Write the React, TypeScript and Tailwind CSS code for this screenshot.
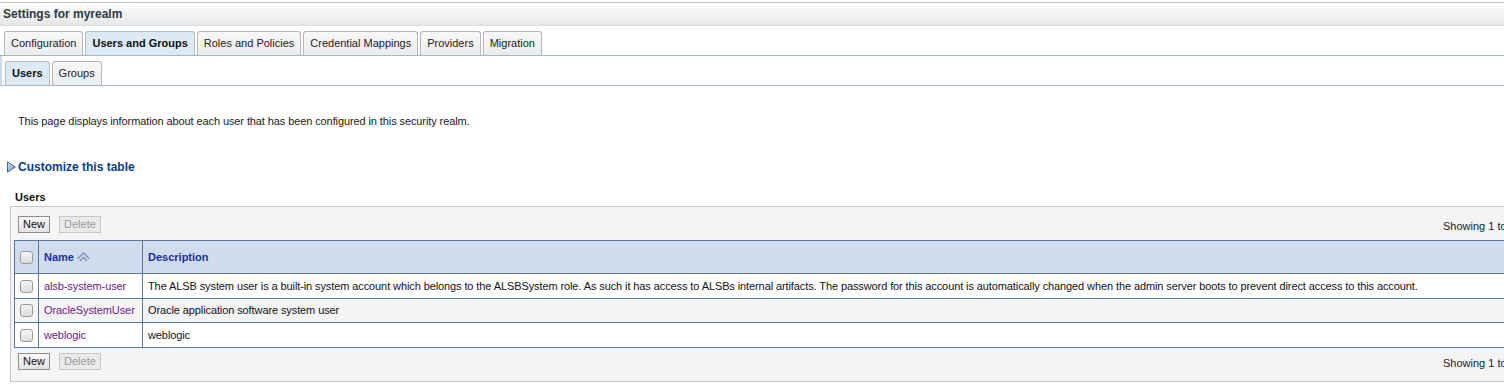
import React from "react";

const font = { fontFamily: '"Liberation Sans", Arial, sans-serif' };

function Tab({ label, active }: { label: string; active?: boolean }) {
  return (
    <div
      className={
        "h-[24px] flex items-center px-[6px] rounded-t-[3px] border border-b-0 text-[11px] " +
        (active
          ? "bg-[#dde9f3] border-[#a9bfd3] font-bold text-[#111]"
          : "bg-gradient-to-b from-[#f8f8f8] to-[#ececec] border-[#b5b5b5] text-[#222]")
      }
    >
      {label}
    </div>
  );
}

function Checkbox() {
  return (
    <div className="w-[13px] h-[13px] rounded-[3px] border border-[#9a9a9a] bg-gradient-to-b from-[#f4f4f4] to-[#dedede]" />
  );
}

function Btn({ label, disabled }: { label: string; disabled?: boolean }) {
  return (
    <div
      className={
        "h-[17px] flex items-center px-[4px] border text-[11px] " +
        (disabled
          ? "border-[#c8c8c8] bg-[#eaeaea] text-[#9a9a9a]"
          : "border-[#8e8e8e] bg-gradient-to-b from-[#fafafa] to-[#e2e2e2] text-[#111]")
      }
    >
      {label}
    </div>
  );
}

function Toolbar() {
  return (
    <div className="flex items-center pl-[7px] pr-[16px] h-[17px]">
      <div className="flex gap-[9px]">
        <Btn label="New" />
        <Btn label="Delete" disabled />
      </div>
      <div className="ml-auto w-[250px] text-[11px] leading-[14px] text-[#222] translate-y-[1px]">
        Showing 1 to 3 of 3 &nbsp;Previous | Next
      </div>
    </div>
  );
}

const rows = [
  {
    name: "alsb-system-user",
    desc: "The ALSB system user is a built-in system account which belongs to the ALSBSystem role. As such it has access to ALSBs internal artifacts. The password for this account is automatically changed when the admin server boots to prevent direct access to this account.",
  },
  { name: "OracleSystemUser", desc: "Oracle application software system user" },
  { name: "weblogic", desc: "weblogic" },
];

export default function App() {
  return (
    <div className="w-[1504px] h-[384px] overflow-hidden bg-white pt-[2px]" style={font}>
      <div className="h-[24px] border-t border-[#c3c7cb] border-b border-b-[#dcdedc] bg-gradient-to-b from-white to-[#e5e7e5] flex items-center pl-[3px] text-[12px] font-bold text-[#2f3a40]">
        Settings for myrealm
      </div>
      <div className="mt-[5px] flex gap-[2px] pl-[4px] border-b border-[#a3b7c9]">
        <Tab label="Configuration" />
        <Tab label="Users and Groups" active />
        <Tab label="Roles and Policies" />
        <Tab label="Credential Mappings" />
        <Tab label="Providers" />
        <Tab label="Migration" />
      </div>
      <div className="flex gap-[2px] pl-[3px] pt-[5px] border-l-2 border-l-[#c9d8e6] border-b border-[#a3b7c9]">
        <Tab label="Users" active />
        <Tab label="Groups" />
      </div>
      <div className="mt-[28px] pl-[18px] text-[11px] leading-[14px] text-[#222] tracking-[-0.1px]">
        This page displays information about each user that has been configured in this security realm.
      </div>
      <div className="mt-[31px] pl-[7px] flex items-center gap-[2px] h-[16px]">
        <svg width="9" height="12" viewBox="0 0 9 12">
          <defs>
            <linearGradient id="tri" x1="0" y1="0" x2="1" y2="1">
              <stop offset="0" stopColor="#d6e1f2" />
              <stop offset="1" stopColor="#6f8fc4" />
            </linearGradient>
          </defs>
          <path d="M0.5 0.8 L8.3 6 L0.5 11.2 Z" fill="url(#tri)" stroke="#41629a" strokeWidth="1" />
        </svg>
        <span className="text-[12px] font-bold text-[#0d3c8c]">Customize this table</span>
      </div>
      <div className="mt-[15px] pl-[15px] text-[11px] leading-[14px] font-bold text-[#111]">Users</div>
      <div className="mt-[2px] ml-[10px] w-[1700px] border border-[#c6c6c6] bg-[#f4f4f4] pt-[9px] pb-[11px]">
        <Toolbar />
        <div className="mt-[7px] ml-[3px] mb-[5px] mr-[3px] border border-[#5b7896] text-[11px]">
          <div className="flex h-[33px] bg-[#cfdcee] border-b border-[#5b7896] font-bold text-[#1b2fa3]">
            <div className="w-[24px] flex items-center justify-center border-r border-[#5b7896]">
              <Checkbox />
            </div>
            <div className="w-[104px] flex items-center pl-[5px] gap-[3px] border-r border-[#5b7896]">
              <span>Name</span>
              <svg width="13" height="10" viewBox="0 0 13 10">
                <path d="M1 6.5 L6.5 1 L12 6.5" fill="none" stroke="#7c8fb0" strokeWidth="1.3" />
                <path d="M3 9 L6.5 5.5 L10 9" fill="none" stroke="#7c8fb0" strokeWidth="1.3" />
              </svg>
            </div>
            <div className="flex-1 flex items-center pl-[5px]">Description</div>
          </div>
          {rows.map((r, i) => (
            <div
              key={r.name}
              className={
                "flex tracking-[-0.1px] " +
                (i === 0 ? "h-[25px] " : "h-[24px] ") +
                (i % 2 === 1 ? "bg-[#f4f4f4] " : "bg-white ") +
                (i < rows.length - 1 ? "border-b border-[#5b7896]" : "")
              }
            >
              <div className="w-[24px] flex items-center justify-center border-r border-[#5b7896]">
                <Checkbox />
              </div>
              <div className="w-[104px] flex items-center pl-[5px] border-r border-[#5b7896] text-[#6e1a86]">
                {r.name}
              </div>
              <div className="flex-1 flex items-center pl-[5px] text-[#111] whitespace-nowrap">{r.desc}</div>
            </div>
          ))}
        </div>
        <Toolbar />
      </div>
    </div>
  );
}
